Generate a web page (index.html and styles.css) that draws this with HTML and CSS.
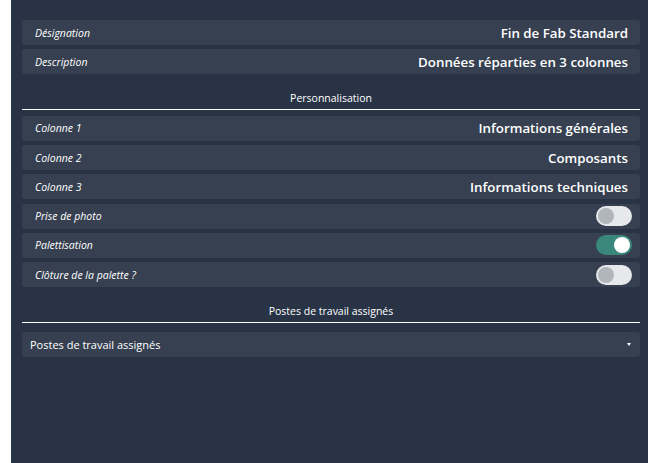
FILE: index.html
```html
<!DOCTYPE html>
<html lang="fr">
<head>
    <meta charset="UTF-8">
    <meta name="viewport" content="width=device-width, initial-scale=1.0">
    <title>Fin de Fab Standard</title>
    <link rel="stylesheet" href="styles.css">
</head>
<body>
<div class="panel">
  <div class="field-row">
    <span class="field-label">Désignation</span>
    <span class="field-value">Fin de Fab Standard</span>
  </div>
  <div class="field-row">
    <span class="field-label">Description</span>
    <span class="field-value">Données réparties en 3 colonnes</span>
  </div>

  <h3 class="section-title">Personnalisation</h3>
  <div class="field-row">
    <span class="field-label">Colonne 1</span>
    <span class="field-value">Informations générales</span>
  </div>
  <div class="field-row">
    <span class="field-label">Colonne 2</span>
    <span class="field-value">Composants</span>
  </div>
  <div class="field-row">
    <span class="field-label">Colonne 3</span>
    <span class="field-value">Informations techniques</span>
  </div>
  <div class="field-row">
    <span class="field-label">Prise de photo</span>
    <span class="switch"><span class="knob"></span></span>
  </div>
  <div class="field-row">
    <span class="field-label">Palettisation</span>
    <span class="switch on"><span class="knob"></span></span>
  </div>
  <div class="field-row">
    <span class="field-label">Clôture de la palette ?</span>
    <span class="switch"><span class="knob"></span></span>
  </div>

  <h3 class="section-title">Postes de travail assignés</h3>
  <div class="field-row select-row">
    <span class="select-text">Postes de travail assignés</span>
    <span class="caret"></span>
  </div>
</div>
</body>
</html>
```

FILE: styles.css
```css
html, body {
    height: 100%;
}
body {
    margin: 0;
    padding: 0 0 0 11px;
    background-color: #ffffff;
    font-family: "Open Sans", "Noto Sans", sans-serif;
    color: #ffffff;
    box-sizing: border-box;
}
.panel {
    background-color: #283345;
    min-height: 100%;
    padding: 20px 8px 0 11px;
    box-sizing: border-box;
}
.field-row {
    display: flex;
    align-items: center;
    justify-content: space-between;
    height: 25px;
    margin-bottom: 4.3px;
    padding: 0 12px 0 13px;
    background-color: #364050;
    border-radius: 3px;
}
.field-label {
    font-size: 10.5px;
    font-style: italic;
}
.field-value {
    font-size: 13.3px;
    font-weight: 600;
}
.section-title {
    margin: 17px 0 5.5px;
    padding-bottom: 3px;
    border-bottom: 1px solid #ffffff;
    font-size: 10.5px;
    font-weight: 400;
    text-align: center;
    line-height: 15px;
}
.switch {
    position: relative;
    width: 36px;
    height: 20px;
    margin-right: -4px;
    border-radius: 10px;
    background-color: #e6e8eb;
}
.switch .knob {
    position: absolute;
    top: 2px;
    left: 2px;
    width: 16px;
    height: 16px;
    border-radius: 50%;
    background-color: #b1b5bc;
}
.switch.on {
    background-color: #3a877c;
}
.switch.on .knob {
    left: 18px;
    background-color: #ffffff;
}
.select-row {
    margin-top: 9px;
    padding-left: 8px;
    padding-right: 9px;
}
.select-text {
    font-size: 11px;
}
.caret {
    width: 0;
    height: 0;
    border-left: 2px solid transparent;
    border-right: 2px solid transparent;
    border-top: 3px solid #ffffff;
}
```
